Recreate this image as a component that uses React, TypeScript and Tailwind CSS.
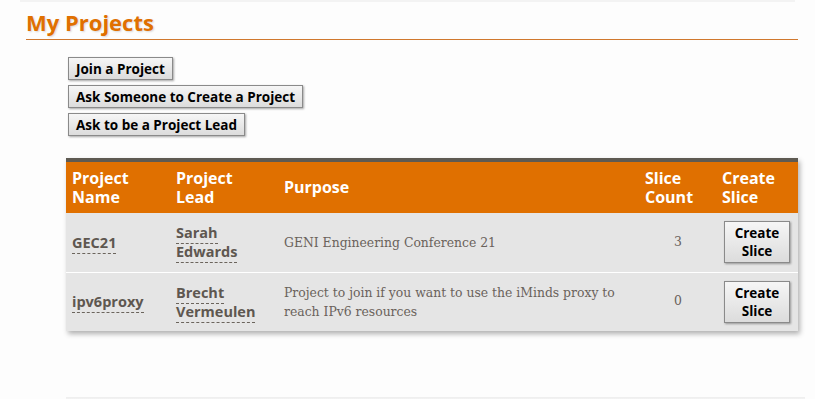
import React from 'react'

interface Project {
  name: string
  lead: string[]
  purpose: string
  slices: number
}

const projects: Project[] = [
  { name: 'GEC21', lead: ['Sarah', 'Edwards'], purpose: 'GENI Engineering Conference 21', slices: 3 },
  {
    name: 'ipv6proxy',
    lead: ['Brecht', 'Vermeulen'],
    purpose: 'Project to join if you want to use the iMinds proxy to reach IPv6 resources',
    slices: 0,
  },
]

const btn =
  'border border-[#8a8a8a] bg-gradient-to-b from-[#f6f6f6] to-[#dcdcdc] shadow-[1px_1px_2px_rgba(0,0,0,0.35)] font-bold text-[13.5px] text-black'

function Dotted({ children }: { children: React.ReactNode }) {
  return <span className="border-b border-dashed border-[#6b645c] pb-[1px]">{children}</span>
}

export default function App() {
  return (
    <div className="min-h-[399px] bg-[#fdfdfd] font-['Open_Sans',sans-serif]">
      <div className="mx-[20px] h-[2px] bg-[#f3f3f3]" />
      <div className="pl-[26px] pr-[17px] pt-[5px]">
        <h1 className="text-[22px] font-bold leading-[30px] text-[#e07000] [text-shadow:1px_1px_2px_rgba(0,0,0,0.15)]">
          My Projects
        </h1>
        <div className="mt-[2px] h-px bg-[#d0782e]" />
      </div>

      <div className="ml-[68px] mt-[17px] flex flex-col items-start gap-[5px]">
        <button className={`${btn} h-[23px] px-[7px] leading-[20px]`}>Join a Project</button>
        <button className={`${btn} h-[23px] px-[7px] leading-[20px]`}>Ask Someone to Create a Project</button>
        <button className={`${btn} h-[23px] px-[7px] leading-[20px]`}>Ask to be a Project Lead</button>
      </div>

      <div className="ml-[66px] mr-[17px] mt-[22px] border-t-4 border-[#5e5a52] shadow-[2px_3px_5px_rgba(0,0,0,0.3)]">
        <table className="w-full table-fixed border-collapse">
          <colgroup>
            <col className="w-[104px]" />
            <col className="w-[107px]" />
            <col />
            <col className="w-[77px]" />
            <col className="w-[83px]" />
          </colgroup>
          <thead>
            <tr className="bg-[#e07000] text-left text-[16px] font-bold leading-[19px] text-white">
              <th className="h-[51px] px-[6px] align-middle">Project<br />Name</th>
              <th className="px-[6px] align-middle">Project<br />Lead</th>
              <th className="px-[7px] align-middle">Purpose</th>
              <th className="px-[7px] align-middle">Slice<br />Count</th>
              <th className="px-[7px] align-middle">Create<br />Slice</th>
            </tr>
          </thead>
          <tbody>
            {projects.map((p) => (
              <tr key={p.name} className="h-[59px] border-b-[1px] border-white bg-[#e5e5e5] text-[#5e5750] last:border-b-0">
                <td className="px-[6px] align-middle text-[14.5px] font-bold leading-[19px]">
                  <Dotted>{p.name}</Dotted>
                </td>
                <td className="px-[6px] align-middle text-[14.5px] font-bold leading-[19px]">
                  <div><Dotted>{p.lead[0]}</Dotted></div>
                  <div><Dotted>{p.lead[1]}</Dotted></div>
                </td>
                <td className="px-[7px] align-middle font-['DejaVu_Serif',serif] text-[12.4px] leading-[19px] text-[#6a625b]">
                  {p.purpose}
                </td>
                <td className="pl-[7px] pr-[33px] text-right align-middle font-['DejaVu_Serif',serif] text-[12.4px] text-[#6a625b]">
                  {p.slices}
                </td>
                <td className="pl-[9px] align-middle">
                  <button className={`${btn} h-[42px] w-[66px] leading-[18px]`}>
                    Create<br />Slice
                  </button>
                </td>
              </tr>
            ))}
          </tbody>
        </table>
      </div>

      <div className="ml-[66px] mr-[10px] mt-[66px] h-[4px] bg-gradient-to-b from-[#eeeeee] to-[#f8f8f8]" />
    </div>
  )
}
